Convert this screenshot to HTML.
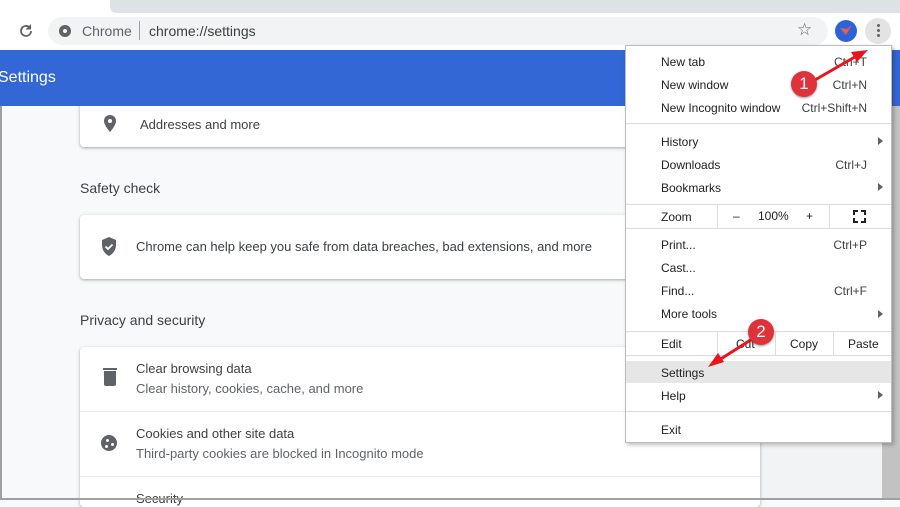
<!DOCTYPE html>
<html><head><style>
*{margin:0;padding:0;box-sizing:border-box}
body{width:900px;height:500px;overflow:hidden;position:relative;background:#f8f9fa;font-family:"Liberation Sans",Arial,sans-serif;color:#202124}
.abs{position:absolute}
.card{position:absolute;left:80px;width:680px;background:#fff;border-radius:4px;box-shadow:0 1px 2px rgba(60,64,67,.3),0 1px 3px 1px rgba(60,64,67,.12)}
.t{position:absolute;font-size:13px;color:#3c4043;white-space:nowrap}
.s{color:#5f6368}
.h{position:absolute;left:80px;font-size:14px;color:#3c4043}
.m{position:absolute;left:661px;font-size:12px;color:#202124;white-space:nowrap}
.k{position:absolute;right:33px;font-size:12px;color:#3c4043}
.sep{position:absolute;left:626px;width:265px;height:1px;background:#dadce0}
.arr{position:absolute;left:878px;width:0;height:0;border-left:5px solid #5f6368;border-top:4px solid transparent;border-bottom:4px solid transparent}
.badge{position:absolute;width:26px;height:26px;border-radius:50%;background:#e0323a;color:#fff;font-size:17px;text-align:center;line-height:26px;box-shadow:0 1px 2px rgba(0,0,0,.4)}
</style></head><body>
<!-- tab strip -->
<div class="abs" style="left:0;top:0;width:900px;height:13px;background:#fff"></div>
<div class="abs" style="left:110px;top:0;width:790px;height:13px;background:#dee1e6;border-bottom-left-radius:6px"></div>
<!-- toolbar -->
<div class="abs" style="left:0;top:13px;width:900px;height:37px;background:#fff"></div>
<svg class="abs" style="left:18px;top:23px" width="16" height="16" viewBox="0 0 16 16"><path d="M13 8a5 5 0 1 1-1.5-3.6" stroke="#5f6368" stroke-width="1.8" fill="none"/><polygon points="13,1 13,6.5 7.5,6.5" fill="#5f6368"/></svg>
<div class="abs" style="left:48px;top:17px;width:780px;height:28px;border-radius:14px;background:#f1f3f4"></div>
<div class="abs" style="left:59px;top:25px;width:12px;height:12px;border-radius:50%;background:#5f6368"></div>
<div class="abs" style="left:63px;top:29px;width:4px;height:4px;border-radius:50%;background:#f1f3f4"></div>
<div class="abs" style="left:82px;top:23px;font-size:14px;color:#5f6368">Chrome</div>
<div class="abs" style="left:139px;top:21px;width:1px;height:19px;background:#9aa0a6"></div>
<div class="abs" style="left:149px;top:23px;font-size:14px;color:#3c4043">chrome://settings</div>
<div class="abs" style="left:797px;top:20px;font-size:17px;color:#5f6368">☆</div>
<div class="abs" style="left:835px;top:20px;width:22px;height:22px;border-radius:50%;background:#2c64d8"></div>
<div class="abs" style="left:840px;top:25px;width:12px;height:10px;background:#f05a4a;clip-path:polygon(0 30%,50% 100%,100% 0,60% 40%)"></div>
<div class="abs" style="left:865px;top:18px;width:26px;height:26px;border-radius:50%;background:#e3e3e3"></div>
<div class="abs" style="left:877px;top:24px;width:3px;height:3px;border-radius:50%;background:#5f6368;box-shadow:0 5px 0 #5f6368,0 10px 0 #5f6368"></div>
<!-- left border / scrollbar -->
<div class="abs" style="left:760px;top:106px;width:122px;height:394px;background:#f1f3f4"></div>
<div class="abs" style="left:882px;top:106px;width:18px;height:394px;background:#c2c2c2"></div>
<!-- cards -->
<div class="card" style="top:100px;height:47px"></div>
<svg class="abs" style="left:103px;top:115px" width="14" height="18" viewBox="0 0 14 18"><path d="M7 0C3.5 0 1 2.6 1 6c0 4.5 6 11 6 11s6-6.5 6-11c0-3.4-2.5-6-6-6z" fill="#5f6368"/><circle cx="7" cy="6" r="2" fill="#fff"/></svg>
<div class="t" style="left:140px;top:117px">Addresses and more</div>
<div class="h" style="top:180px">Safety check</div>
<div class="card" style="top:215px;height:64px"></div>
<svg class="abs" style="left:101px;top:237px" width="16" height="19" viewBox="0 0 16 19"><path d="M8 0L1 3v5c0 5 3 9 7 11 4-2 7-6 7-11V3z" fill="#5f6368"/><path d="M4.5 9.5l2.5 2.5 4.5-4.5" stroke="#fff" stroke-width="1.8" fill="none"/></svg>
<div class="t" style="left:136px;top:239px">Chrome can help keep you safe from data breaches, bad extensions, and more</div>
<div class="h" style="top:312px">Privacy and security</div>
<div class="card" style="top:347px;height:160px"></div>
<div class="abs" style="left:80px;top:411px;width:680px;height:1px;background:#e8eaed"></div>
<div class="abs" style="left:80px;top:476px;width:680px;height:1px;background:#e8eaed"></div>
<div class="abs" style="left:104px;top:371px;width:12px;height:15px;background:#5f6368;border-radius:0 0 2px 2px"></div>
<div class="abs" style="left:103px;top:368px;width:14px;height:2px;background:#5f6368"></div>
<div class="t" style="left:136px;top:361px">Clear browsing data</div>
<div class="t s" style="left:136px;top:381px">Clear history, cookies, cache, and more</div>
<div class="abs" style="left:101px;top:435px;width:16px;height:16px;border-radius:50%;background:#5f6368"></div>
<div class="abs" style="left:106px;top:439px;width:3px;height:3px;border-radius:50%;background:#fff;box-shadow:5px 4px 0 #fff,-1px 6px 0 #fff"></div>
<div class="t" style="left:136px;top:426px">Cookies and other site data</div>
<div class="t s" style="left:136px;top:446px">Third-party cookies are blocked in Incognito mode</div>
<div class="t" style="left:136px;top:491px">Security</div>
<!-- blue header -->
<div class="abs" style="left:0;top:50px;width:900px;height:56px;background:#3367d6"></div>
<div class="abs" style="left:-2px;top:69px;font-size:16px;color:#fff">Settings</div>
<div class="abs" style="left:0;top:106px;width:2px;height:394px;background:#a0a0a0"></div>
<div class="abs" style="left:0;top:498px;width:900px;height:2px;background:#a0a0a0"></div>
<!-- menu -->
<div class="abs" style="left:625px;top:45px;width:267px;height:398px;background:#fff;border:1px solid #bcbcbc;box-shadow:2px 2px 4px rgba(0,0,0,.25)"></div>
<div class="m" style="top:55px">New tab</div><div class="k" style="top:55px">Ctrl+T</div>
<div class="m" style="top:78px">New window</div><div class="k" style="top:78px">Ctrl+N</div>
<div class="m" style="top:101px">New Incognito window</div><div class="k" style="top:101px">Ctrl+Shift+N</div>
<div class="sep" style="top:123px"></div>
<div class="m" style="top:135px">History</div><div class="arr" style="top:137px"></div>
<div class="m" style="top:158px">Downloads</div><div class="k" style="top:158px">Ctrl+J</div>
<div class="m" style="top:181px">Bookmarks</div><div class="arr" style="top:183px"></div>
<div class="sep" style="top:204px"></div>
<div class="abs" style="left:717px;top:205px;width:1px;height:23px;background:#dadce0"></div>
<div class="abs" style="left:829px;top:205px;width:1px;height:23px;background:#dadce0"></div>
<div class="m" style="top:210px">Zoom</div>
<div class="m" style="left:733px;top:209px">–</div>
<div class="m" style="left:758px;top:209px">100%</div>
<div class="m" style="left:806px;top:209px">+</div>
<div class="abs" style="left:853px;top:210px;width:13px;height:13px;border:2px solid #202124"></div>
<div class="abs" style="left:858px;top:208px;width:3px;height:17px;background:#fff"></div>
<div class="abs" style="left:851px;top:215px;width:17px;height:3px;background:#fff"></div>
<div class="sep" style="top:228px"></div>
<div class="m" style="top:238px">Print...</div><div class="k" style="top:238px">Ctrl+P</div>
<div class="m" style="top:261px">Cast...</div>
<div class="m" style="top:284px">Find...</div><div class="k" style="top:284px">Ctrl+F</div>
<div class="m" style="top:307px">More tools</div><div class="arr" style="top:310px"></div>
<div class="sep" style="top:331px"></div>
<div class="abs" style="left:717px;top:331px;width:1px;height:24px;background:#dadce0"></div>
<div class="abs" style="left:775px;top:331px;width:1px;height:24px;background:#dadce0"></div>
<div class="abs" style="left:833px;top:331px;width:1px;height:24px;background:#dadce0"></div>
<div class="sep" style="top:355px"></div>
<div class="m" style="top:337px">Edit</div>
<div class="m" style="left:736px;top:337px">Cut</div>
<div class="m" style="left:790px;top:337px">Copy</div>
<div class="m" style="left:848px;top:337px">Paste</div>
<div class="abs" style="left:626px;top:361px;width:265px;height:22px;background:#e6e6e6"></div>
<div class="m" style="top:366px">Settings</div>
<div class="m" style="top:389px">Help</div><div class="arr" style="top:391px"></div>
<div class="sep" style="top:411px"></div>
<div class="m" style="top:423px">Exit</div>
<!-- arrows -->
<svg class="abs" style="left:0;top:0" width="900" height="500">
<line x1="808" y1="84" x2="860" y2="54" stroke="#e8161c" stroke-width="3"/>
<polygon points="868,50 851,52 857,62" fill="#e8161c"/>
<line x1="760" y1="334" x2="716" y2="362" stroke="#e8161c" stroke-width="3"/>
<polygon points="708,367 718,353 724,362" fill="#e8161c"/>
</svg>
<div class="badge" style="left:791px;top:71px">1</div>
<div class="badge" style="left:748px;top:319px">2</div>
</body></html>
